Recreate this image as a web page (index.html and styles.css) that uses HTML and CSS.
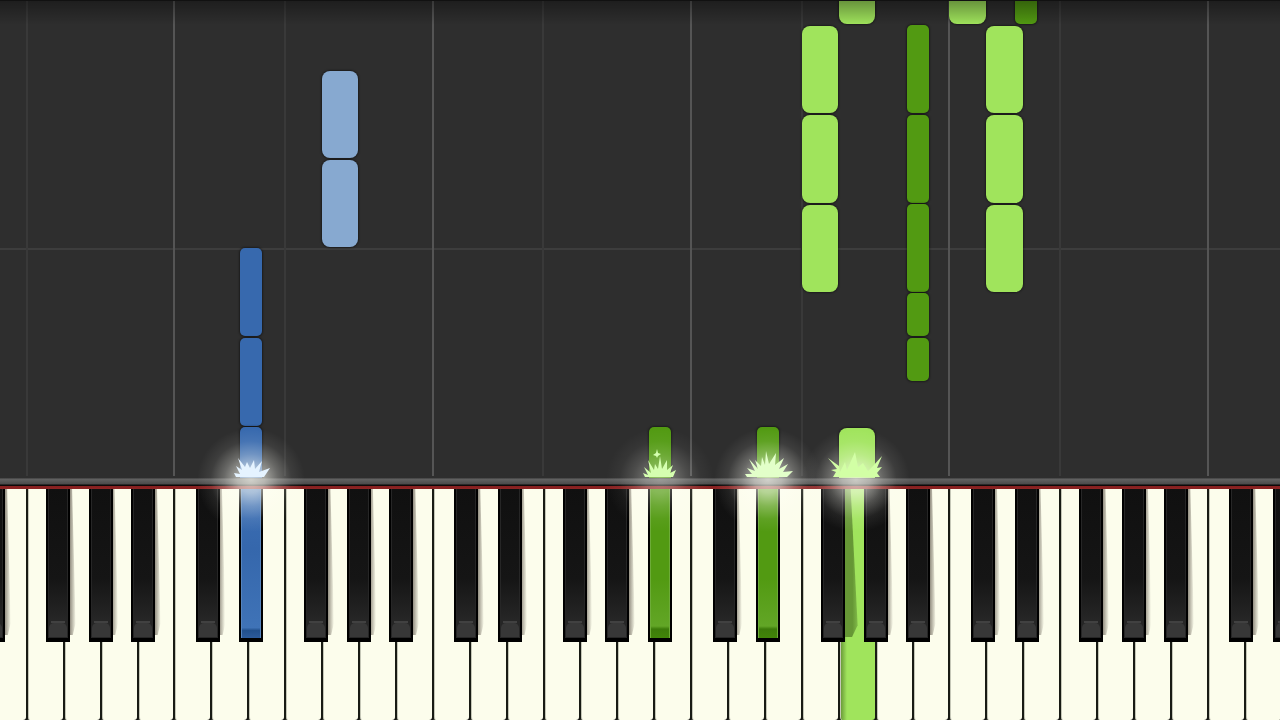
FILE: index.html
```html
<!DOCTYPE html>
<html lang="en">
<head>
    <meta charset="UTF-8">
    <meta name="viewport" content="width=device-width, initial-scale=1.0">
    <title>Piano Roll</title>
    <link rel="stylesheet" href="styles.css">
</head>
<body>
    <main class="stage">
        <section class="roll" id="roll">
            <div class="bar-line"></div>
        </section>
        <div class="rail" id="rail"></div>
        <section class="keyboard" id="keyboard"></section>
    </main>
    <script src="script.js"></script>
</body>
</html>
```

FILE: styles.css
```css
* {
    box-sizing: border-box;
}
body {
    margin: 0;
    background-color: #2e2e2e;
    overflow: hidden;
}
/* 36 white keys, the first and last ones run off the window */
.stage {
    display: flex;
    flex-direction: column;
    width: 103.78%;
    height: 100vh;
    margin-left: -3.75%;
}

/* falling notes */
.roll {
    position: relative;
    flex: 1;
    overflow: hidden;
    background-color: #2e2e2e;
}
.roll::after {
    content: "";
    position: absolute;
    top: 0;
    left: 0;
    right: 0;
    height: 24px;
    border-top: 1px solid #111;
    background: linear-gradient(rgba(0, 0, 0, 0.35), rgba(0, 0, 0, 0));
}
.bar-line {
    position: absolute;
    left: 0;
    right: 0;
    bottom: 228px;
    height: 2px;
    background-color: #3d3d3d;
}
.lane {
    position: absolute;
    top: 0;
    bottom: 2px;
    width: 2px;
    background-color: #393939;
}
.lane.octave {
    background-color: #555;
}
.note {
    position: absolute;
    border-radius: 8px;
    box-shadow: 0 0 2px 1px rgba(0, 0, 0, 0.4);
}
.note.white {
    width: 2.74%;
    margin-left: 1px;
}
.note.black {
    width: 1.66%;
    margin-left: 1px;
    border-radius: 5px;
}
.note.blue.white {
    background-color: #87a9d0;
}
.note.blue.black {
    background-color: #3769ae;
}
.note.green.white {
    background-color: #a0e45c;
}
.note.green.black {
    background-color: #529a12;
}
.note.playing {
    border-bottom-left-radius: 0;
    border-bottom-right-radius: 0;
}

/* strip between roll and keys */
.rail {
    position: relative;
    z-index: 2;
    height: 11px;
    background: linear-gradient(#333 0, #626262 1px, #4b4b4b 6px, #080808 7px, #160808 8px, #861f1f 8px, #8d2424 11px);
}
.flare {
    position: absolute;
    top: -66px;
    width: 120px;
    height: 130px;
    margin-left: -60px;
    pointer-events: none;
}
.flare svg {
    display: block;
    width: 120px;
    height: 130px;
}

/* keyboard */
.keyboard {
    display: flex;
    height: 231px;
    background-color: #111;
}
.slot {
    position: relative;
    flex: 1;
}
.key {
    display: block;
    margin: 0;
    padding: 0;
    cursor: pointer;
}
.white-key {
    width: 100%;
    height: 100%;
    border: 0;
    border-left: 2px solid #181b14;
    border-radius: 0 0 3px 3px;
    background-color: #fcfdec;
    box-shadow: inset 1px 0 0 #c5c7b7;
}
.white-key.green {
    background: linear-gradient(90deg, #629033 0, #a0e45c 7px);
}
.black-key {
    position: absolute;
    z-index: 1;
    top: 0;
    width: 65%;
    height: 153px;
    border: solid #000;
    border-width: 0 2px 4px;
    background: linear-gradient(#101010, #151515 60%, #262626 88%);
    box-shadow: inset 1px 0 0 #262626, inset -1px 0 0 #262626;
}
.black-key::before {
    content: "";
    position: absolute;
    left: 1px;
    right: 1px;
    bottom: 1px;
    height: 14px;
    border-radius: 5px 5px 0 0;
    background-color: #373737;
}
.black-key::after {
    content: "";
    position: absolute;
    left: 3px;
    right: 3px;
    bottom: 15px;
    height: 2px;
    background-color: #414141;
}
.black-key.blue {
    background: linear-gradient(#3c6fb5, #3567ac 40%, #3f73b7 93%, #22508c 95%, #2c5b9b);
    box-shadow: inset 1px 0 0 #5684bd, inset -1px 0 0 #5684bd;
}
.black-key.green {
    background: linear-gradient(#529a12, #529a12 60%, #62a626 92%, #3d7c0a 94%, #418509);
    box-shadow: inset 1px 0 0 #6dac38, inset -1px 0 0 #6dac38;
}
.black-key.blue::before, .black-key.blue::after,
.black-key.green::before, .black-key.green::after {
    display: none;
}
/* shadow that widens towards the front of the key */
.shade {
    position: absolute;
    top: 0;
    width: 7px;
    height: 146px;
    z-index: 1;
    background: linear-gradient(90deg, rgba(50, 40, 30, 0.6), rgba(50, 40, 30, 0));
    clip-path: polygon(0 0, 50% 0, 100% 92%, 60% 100%, 0 100%);
}
.shade.deep {
    width: 14px;
    height: 148px;
    background: linear-gradient(90deg, #669735 60%, #82bd49);
}

@media (max-width: 700px) {
    .note {
        border-radius: 4px;
    }
}
```

FILE: script.js
```js
const WHITE_KEYS = 36;
const LETTERS = ["D", "E", "F", "G", "A", "B", "C"];
// left edge of the sharp, as a part of the white key before it
const SHARPS = { C: 0.61, D: 0.79, F: 0.55, G: 0.70, A: 0.85 };

// index of the white key, kind of key, colour, bottom above the rail, height
const notes = [
    [7, "black", "blue", 142, 88],
    [7, "black", "blue", 52, 88],
    [7, "black", "blue", 0, 51],
    [10, "white", "blue", 320, 87],
    [10, "white", "blue", 231, 87],
    [23, "white", "green", 365, 87],
    [23, "white", "green", 275, 88],
    [23, "white", "green", 186, 87],
    [28, "white", "green", 365, 87],
    [28, "white", "green", 275, 88],
    [28, "white", "green", 186, 87],
    [24, "white", "green", 454, 40],
    [27, "white", "green", 454, 40],
    [28, "black", "green", 454, 40],
    [25, "black", "green", 365, 88],
    [25, "black", "green", 275, 88],
    [25, "black", "green", 186, 88],
    [25, "black", "green", 142, 43],
    [25, "black", "green", 97, 43],
    [18, "black", "green", 0, 51],
    [21, "black", "green", 0, 51],
    [24, "white", "green", 0, 50]
];

const sparks = {
    small: "M45 65 L43 61 L48 63 L44 55 L51 61 L48 48 L54 58 L55 52 L58 57 L60 44 L62 57 L67 48 L67 58 L73 53 L70 61 L76 58 L73 65Z",
    blue: "M45 65 L43 61 L49 62 L45 54 L51 58 L47 46 L54 55 L56 50 L59 56 L63 48 L64 57 L71 49 L68 60 L79 56 L73 65Z",
    large: "M39 65 L37 62 L44 62 L39 56 L47 59 L41 47 L50 57 L47 48 L53 54 L54 45 L57 53 L58 39 L61 52 L68 41 L67 53 L76 46 L71 57 L80 52 L75 60 L85 59 L79 65Z",
    wide: "M37 65 L40 60 L35 58 L41 57 L32 46 L43 54 L44 60 L49 50 L51 58 L59 40 L62 55 L67 51 L72 59 L77 54 L86 44 L81 56 L86 55 L81 61 L84 65Z"
};

const flares = [
    { key: 7, kind: "black", shape: "blue", fill: "#e5f3ff", glow: 0.95 },
    { key: 18, kind: "black", shape: "small", fill: "#d5ffb0", glow: 0.5 },
    { key: 21, kind: "black", shape: "large", fill: "#e2ffc9", glow: 0.95 },
    { key: 24, kind: "white", shape: "wide", fill: "#d2ffa5", glow: 0.9 }
];

const roll = document.getElementById("roll");
const rail = document.getElementById("rail");
const keyboard = document.getElementById("keyboard");

function letterOf(index) {
    return LETTERS[index % 7];
}

function percent(index, kind) {
    const shift = kind === "black" ? SHARPS[letterOf(index)] : 0;
    return (index + shift) / WHITE_KEYS * 100;
}

function add(parent, tag, className) {
    const el = document.createElement(tag);
    el.className = className;
    parent.appendChild(el);
    return el;
}

function pressedColor(index, kind) {
    const note = notes.find(n => n[0] === index && n[1] === kind && n[3] === 0);
    return note ? note[2] : "";
}

for (let i = 0; i < WHITE_KEYS; i++) {
    const letter = letterOf(i);

    if (letter === "C" || letter === "F") {
        const lane = add(roll, "div", letter === "C" ? "lane octave" : "lane");
        lane.style.left = percent(i, "white") + "%";
    }

    const slot = add(keyboard, "div", "slot");
    const white = add(slot, "button", "key white-key " + pressedColor(i, "white"));
    white.setAttribute("aria-label", letter);

    if (SHARPS[letter]) {
        const color = pressedColor(i, "black");
        if (!color) {
            const deep = pressedColor(i + 1, "white") ? " deep" : "";
            const shade = add(slot, "div", "shade" + deep);
            shade.style.left = (SHARPS[letter] + 0.61) * 100 + "%";
        }
        const black = add(slot, "button", "key black-key " + color);
        black.style.left = SHARPS[letter] * 100 + "%";
        black.setAttribute("aria-label", letter + " sharp");
    }
}

notes.forEach(([index, kind, color, bottom, height]) => {
    const note = add(roll, "div", `note ${kind} ${color}${bottom === 0 ? " playing" : ""}`);
    note.style.left = percent(index, kind) + "%";
    note.style.bottom = bottom + "px";
    note.style.height = height + "px";
});

flares.forEach((flare, n) => {
    const el = add(rail, "div", "flare");
    const half = (flare.kind === "black" ? 0.325 : 0.5) / WHITE_KEYS * 100;
    el.style.left = percent(flare.key, flare.kind) + half + "%";
    // second spark floats above the small one
    const star = flare.shape === "small" ? `<path d="M57 37 L58 41 L61 42 L58 44 L57 46 L56 44 L53 43 L56 41Z" fill="${flare.fill}"/>` : "";
    el.innerHTML = `
        <svg viewBox="0 0 120 130" aria-hidden="true">
            <defs>
                <radialGradient id="glow${n}">
                    <stop offset="0" stop-color="#fffff6" stop-opacity="${flare.glow * 0.75}"/>
                    <stop offset="0.25" stop-color="#fffff6" stop-opacity="${flare.glow * 0.6}"/>
                    <stop offset="0.5" stop-color="#fffff6" stop-opacity="${flare.glow * 0.3}"/>
                    <stop offset="0.75" stop-color="#fffff6" stop-opacity="${flare.glow * 0.08}"/>
                    <stop offset="1" stop-color="#fffff6" stop-opacity="0"/>
                </radialGradient>
            </defs>
            <ellipse cx="60" cy="68" rx="54" ry="52" fill="url(#glow${n})"/>
            <path d="${sparks[flare.shape]}" fill="${flare.fill}"/>
            ${star}
        </svg>`;
});
```
